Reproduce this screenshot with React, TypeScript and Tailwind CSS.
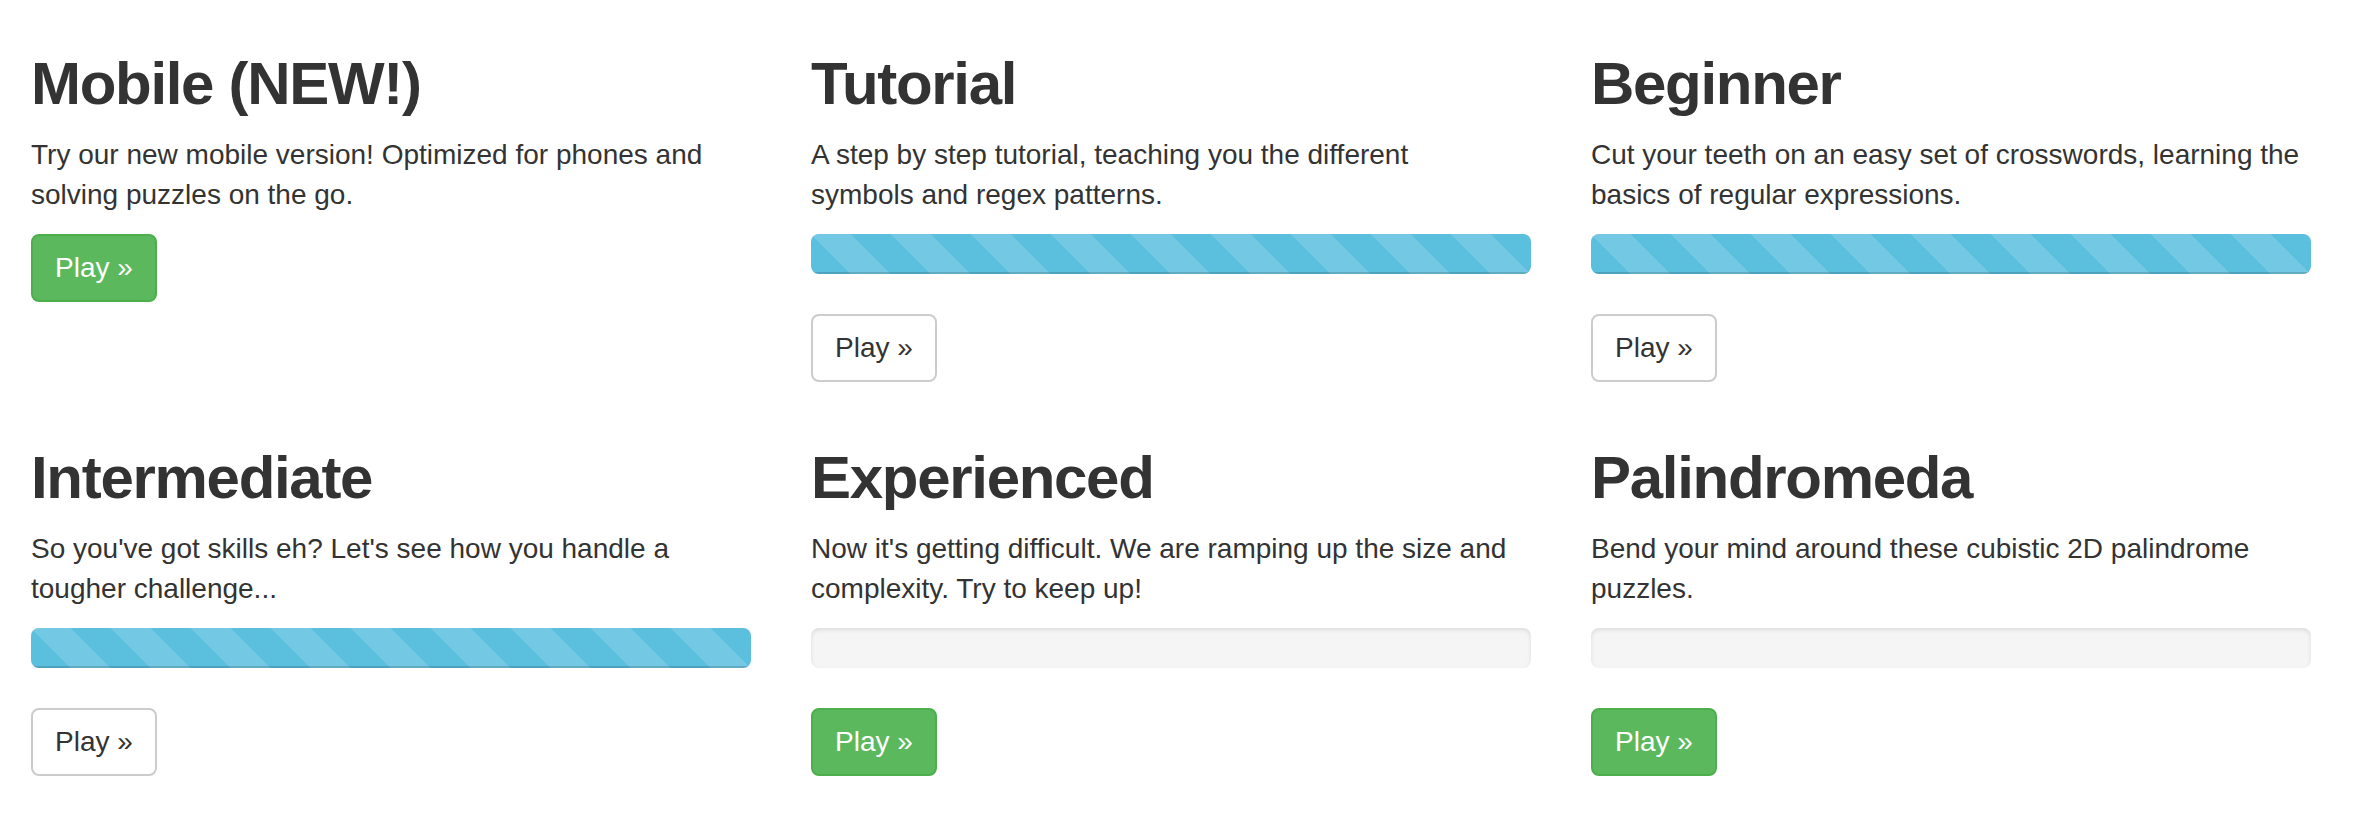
import React from 'react';

type Level = {
  title: string;
  lines: string[];
  progress: 'none' | 'full' | 'empty';
  primary: boolean;
};

const levels: Level[] = [
  {
    title: 'Mobile (NEW!)',
    lines: ['Try our new mobile version! Optimized for phones and', 'solving puzzles on the go.'],
    progress: 'none',
    primary: true,
  },
  {
    title: 'Tutorial',
    lines: ['A step by step tutorial, teaching you the different', 'symbols and regex patterns.'],
    progress: 'full',
    primary: false,
  },
  {
    title: 'Beginner',
    lines: ['Cut your teeth on an easy set of crosswords, learning the', 'basics of regular expressions.'],
    progress: 'full',
    primary: false,
  },
  {
    title: 'Intermediate',
    lines: ["So you've got skills eh? Let's see how you handle a", 'tougher challenge...'],
    progress: 'full',
    primary: false,
  },
  {
    title: 'Experienced',
    lines: ["Now it's getting difficult. We are ramping up the size and", 'complexity. Try to keep up!'],
    progress: 'empty',
    primary: true,
  },
  {
    title: 'Palindromeda',
    lines: ['Bend your mind around these cubistic 2D palindrome', 'puzzles.'],
    progress: 'empty',
    primary: true,
  },
];

const LevelCard: React.FC<{ level: Level }> = ({ level }) => (
  <div className="pr-[60px]">
    <h2 className="text-[60px] leading-[66px] font-bold tracking-[-1.3px] mb-[18px]">{level.title}</h2>
    <p className="text-[28px] leading-[40px] whitespace-nowrap mb-[19px]">
      {level.lines[0]}
      <br />
      {level.lines[1]}
    </p>

    {/* Progress */}
    {level.progress !== 'none' && (
      <div className="h-[40px] w-[720px] mb-[40px] rounded-[8px] bg-[#f5f5f5] shadow-[inset_0_2px_4px_rgba(0,0,0,0.1)] overflow-hidden">
        {level.progress === 'full' && (
          <div className="h-full w-full bg-[#5bc0de] bg-[linear-gradient(45deg,rgba(255,255,255,0.15)_25%,transparent_25%,transparent_50%,rgba(255,255,255,0.15)_50%,rgba(255,255,255,0.15)_75%,transparent_75%,transparent)] bg-[length:80px_80px] shadow-[inset_0_-2px_0_rgba(0,0,0,0.15)]"></div>
        )}
      </div>
    )}

    <button
      className={`w-[126px] h-[68px] rounded-[8px] border-2 text-[28px] leading-[40px] text-center ${
        level.primary
          ? 'bg-[#5cb85c] border-[#4cae4c] text-white'
          : 'bg-white border-[#cccccc] text-[#333333]'
      }`}
    >
      Play »
    </button>
  </div>
);

const App: React.FC = () => {
  return (
    <div className="min-h-screen bg-white text-[#333333] font-['Liberation_Sans',Arial,sans-serif] pt-[51px] pl-[31px]">
      <div className="grid grid-cols-[repeat(3,780px)] gap-y-[63px]">
        {levels.map((level) => (
          <LevelCard key={level.title} level={level} />
        ))}
      </div>
    </div>
  );
};

export default App;
